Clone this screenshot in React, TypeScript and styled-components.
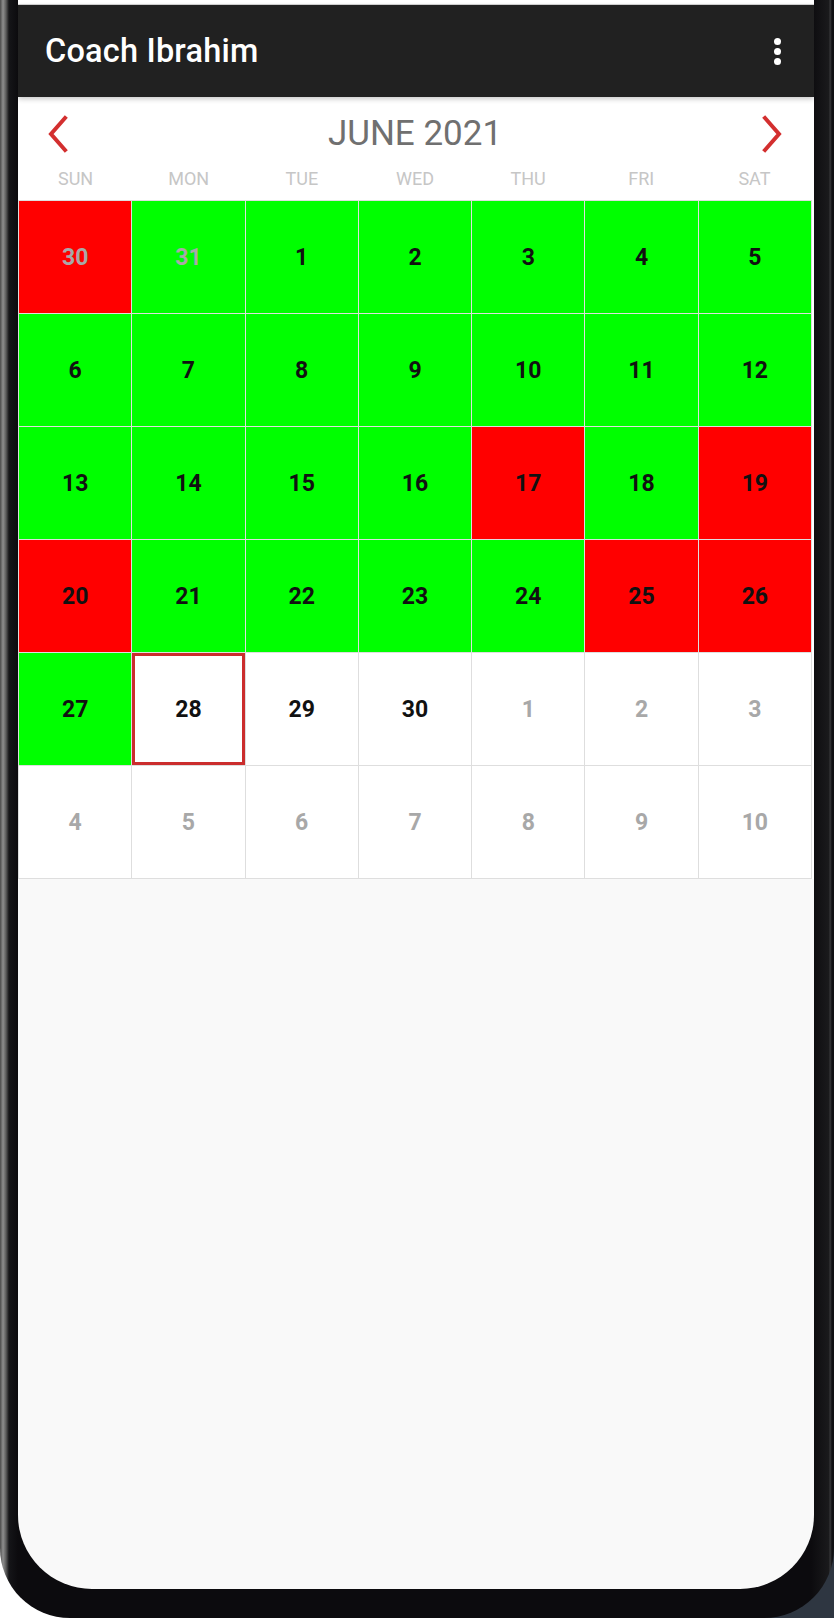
import styled, { createGlobalStyle } from "styled-components";

type Tone = "green" | "red" | "plain";

type Day = {
  label: number;
  tone: Tone;
  outside?: boolean;
  today?: boolean;
};

const WEEKDAYS = ["SUN", "MON", "TUE", "WED", "THU", "FRI", "SAT"];

const g = (label: number): Day => ({ label, tone: "green" });
const r = (label: number): Day => ({ label, tone: "red" });
const w = (label: number): Day => ({ label, tone: "plain" });
const o = (label: number, tone: Tone = "plain"): Day => ({ label, tone, outside: true });

const DAYS: Day[] = [
  o(30, "red"), o(31, "green"), g(1), g(2), g(3), g(4), g(5),
  g(6), g(7), g(8), g(9), g(10), g(11), g(12),
  g(13), g(14), g(15), g(16), r(17), g(18), r(19),
  r(20), g(21), g(22), g(23), g(24), r(25), r(26),
  g(27), { label: 28, tone: "plain", today: true }, w(29), w(30), o(1), o(2), o(3),
  o(4), o(5), o(6), o(7), o(8), o(9), o(10),
];

const App = () => {
  return (
    <>
      <GlobalStyle />
      <Device>
        <Frame>
          <Screen>
            <StatusStrip />
            <AppBar>
              <AppTitle>Coach Ibrahim</AppTitle>
              <MenuButton aria-label="menu">
                <Dot />
                <Dot />
                <Dot />
              </MenuButton>
            </AppBar>
            <Calendar>
              <MonthBar>
                <Chevron viewBox="0 0 22 38" aria-hidden>
                  <polyline points="18,3 4,19 18,35" />
                </Chevron>
                <MonthTitle>JUNE 2021</MonthTitle>
                <Chevron viewBox="0 0 22 38" aria-hidden>
                  <polyline points="4,3 18,19 4,35" />
                </Chevron>
              </MonthBar>
              <WeekdayRow>
                {WEEKDAYS.map((d) => (
                  <Weekday key={d}>{d}</Weekday>
                ))}
              </WeekdayRow>
              <DayGrid>
                {DAYS.map((d, i) => (
                  <DayCell key={i} $tone={d.tone} $today={d.today}>
                    <DayNumber $outside={d.outside}>{d.label}</DayNumber>
                  </DayCell>
                ))}
              </DayGrid>
            </Calendar>
          </Screen>
        </Frame>
      </Device>
    </>
  );
};

const GlobalStyle = createGlobalStyle`
  html, body {
    margin: 0;
    padding: 0;
    background: #ffffff;
  }
  body {
    font-family: Roboto, "Noto Sans", "Liberation Sans", sans-serif;
  }
`;

const Device = styled.div`
  width: 834px;
  height: 1618px;
  overflow: hidden;
  background: linear-gradient(90deg, #ffffff 50%, #2e3641 50%);
`;

const Frame = styled.div`
  box-sizing: border-box;
  width: 100%;
  height: 100%;
  padding: 0 20px 29px 18px;
  border-radius: 0 0 70px 70px;
  background:
    linear-gradient(
      90deg,
      #4a4a4a 0,
      #8e8e8e 3px,
      #5c5c5c 6px,
      #151518 9px,
      #0c0b0e 18px,
      #0c0b0e 811px,
      #1a1a1c 829px,
      #3a3a3c 830px,
      #101012 832px
    );
`;

const Screen = styled.div`
  display: flex;
  flex-direction: column;
  height: 100%;
  overflow: hidden;
  background: #f9f9f9;
  border-radius: 0 0 74px 74px;
`;

const StatusStrip = styled.div`
  height: 4px;
  flex: none;
  background: #ffffff;
  border-bottom: 1px solid #d6d6d6;
`;

const AppBar = styled.header`
  position: relative;
  z-index: 1;
  flex: none;
  height: 92px;
  display: flex;
  align-items: center;
  justify-content: space-between;
  padding: 0 33px 0 27px;
  background: #212121;
  box-shadow: 0 2px 5px rgba(0, 0, 0, 0.22);
`;

const AppTitle = styled.h1`
  margin: 0;
  color: #ffffff;
  font-size: 32.5px;
  font-weight: 500;
  letter-spacing: 0.2px;
`;

const MenuButton = styled.div`
  display: flex;
  flex-direction: column;
  align-items: center;
  gap: 3px;
  width: 8px;
`;

const Dot = styled.span`
  width: 7px;
  height: 7px;
  border-radius: 50%;
  background: #ffffff;
`;

const Calendar = styled.section`
  flex: none;
  background: #ffffff;
`;

const MonthBar = styled.div`
  height: 72px;
  display: flex;
  align-items: center;
  justify-content: space-between;
  padding: 0 31px 0 29px;
`;

const MonthTitle = styled.h2`
  margin: 0;
  color: #707070;
  font-size: 35px;
  font-weight: 400;
  line-height: 1;
`;

const Chevron = styled.svg`
  width: 22px;
  height: 38px;
  margin-top: 2px;
  fill: none;
  stroke: #d32f2f;
  stroke-width: 4;
  stroke-linecap: square;
`;

const WeekdayRow = styled.div`
  display: grid;
  grid-template-columns: repeat(7, 1fr);
  height: 31px;
  padding: 0 3px 0 1px;
`;

const Weekday = styled.span`
  text-align: center;
  color: #c6c6c6;
  font-size: 18px;
  line-height: 19px;
`;

const DayGrid = styled.div`
  display: grid;
  grid-template-columns: repeat(7, 1fr);
  grid-template-rows: repeat(6, 112px);
  gap: 1px;
  padding: 1px;
  margin-right: 2px;
  background: #dedede;
`;

const toneColor: Record<Tone, string> = {
  green: "#00ff00",
  red: "#ff0000",
  plain: "#ffffff",
};

const DayCell = styled.div<{ $tone: Tone; $today?: boolean }>`
  box-sizing: border-box;
  display: flex;
  align-items: center;
  justify-content: center;
  background: ${(p) => toneColor[p.$tone]};
  border: ${(p) => (p.$today ? "3px solid #cb2d2d" : "none")};
`;

const DayNumber = styled.span<{ $outside?: boolean }>`
  color: ${(p) => (p.$outside ? "#a8a8a8" : "#111111")};
  font-size: 23px;
  font-weight: 700;
`;

export default App;
